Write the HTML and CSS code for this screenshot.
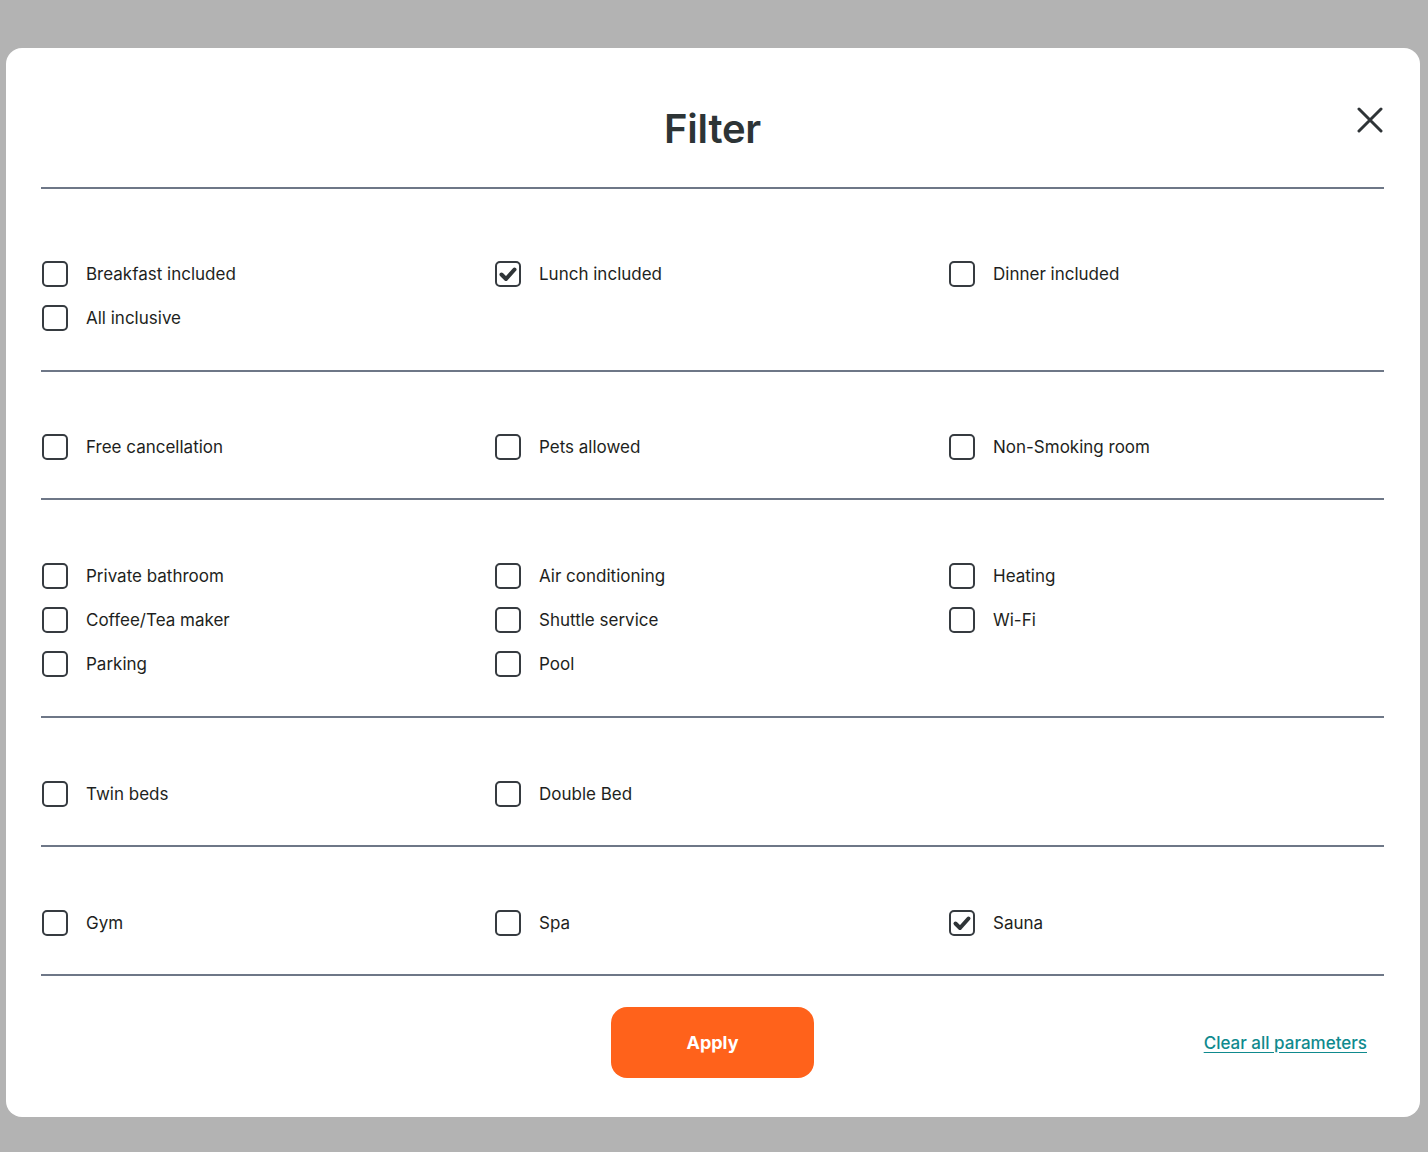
FILE: index.html
```html
<!DOCTYPE html>
<html lang="en">
<head>
<meta charset="utf-8">
<title>Filter</title>
<link rel="stylesheet" href="styles.css">
</head>
<body>
<div class="modal">
  <header class="modal-header">
    <h1 class="title">Filter</h1>
    <button class="close" aria-label="Close">
      <svg width="26" height="26" viewBox="0 0 26 26"><path d="M2 2 L24 24 M24 2 L2 24" stroke="#2f3437" stroke-width="3" stroke-linecap="round" fill="none"/></svg>
    </button>
  </header>

  <section class="group first">
    <label class="opt"><span class="box"></span><span>Breakfast included</span></label>
    <label class="opt"><span class="box checked"><svg viewBox="0 0 26 26" width="26" height="26"><path d="M6.5 13.5 L11 18 L19.5 8.5" stroke="#2f3437" stroke-width="4" fill="none" stroke-linecap="round" stroke-linejoin="round"/></svg></span><span>Lunch included</span></label>
    <label class="opt"><span class="box"></span><span>Dinner included</span></label>
    <label class="opt"><span class="box"></span><span>All inclusive</span></label>
  </section>

  <section class="group second">
    <label class="opt"><span class="box"></span><span>Free cancellation</span></label>
    <label class="opt"><span class="box"></span><span>Pets allowed</span></label>
    <label class="opt"><span class="box"></span><span>Non-Smoking room</span></label>
  </section>

  <section class="group three">
    <label class="opt"><span class="box"></span><span>Private bathroom</span></label>
    <label class="opt"><span class="box"></span><span>Air conditioning</span></label>
    <label class="opt"><span class="box"></span><span>Heating</span></label>
    <label class="opt"><span class="box"></span><span>Coffee/Tea maker</span></label>
    <label class="opt"><span class="box"></span><span>Shuttle service</span></label>
    <label class="opt"><span class="box"></span><span>Wi-Fi</span></label>
    <label class="opt"><span class="box"></span><span>Parking</span></label>
    <label class="opt"><span class="box"></span><span>Pool</span></label>
  </section>

  <section class="group">
    <label class="opt"><span class="box"></span><span>Twin beds</span></label>
    <label class="opt"><span class="box"></span><span>Double Bed</span></label>
  </section>

  <section class="group">
    <label class="opt"><span class="box"></span><span>Gym</span></label>
    <label class="opt"><span class="box"></span><span>Spa</span></label>
    <label class="opt"><span class="box checked"><svg viewBox="0 0 26 26" width="26" height="26"><path d="M6.5 13.5 L11 18 L19.5 8.5" stroke="#2f3437" stroke-width="4" fill="none" stroke-linecap="round" stroke-linejoin="round"/></svg></span><span>Sauna</span></label>
  </section>

  <footer class="modal-footer">
    <span></span>
    <button class="apply">Apply</button>
    <a class="clear" href="#">Clear all parameters</a>
  </footer>
</div>
</body>
</html>
```

FILE: styles.css
```css
* { box-sizing: border-box; }
html, body {
  margin: 0;
  padding: 0;
  background: #b3b3b3;
  font-family: Inter, "Noto Sans", sans-serif;
}
body {
  padding: 48px 8px 0 6px;
  height: 1152px;
  overflow: hidden;
}
.modal {
  width: 1414px;
  height: 1069px;
  background: #fff;
  border-radius: 16px;
  padding: 0 36px 0 35px;
}
.modal-header {
  position: relative;
  padding: 57px 0 34px;
  border-bottom: 2px solid #6e7787;
  text-align: center;
}
.title {
  margin: 0;
  font-size: 40px;
  line-height: 48px;
  font-weight: 600;
  color: #2d3436;
  letter-spacing: -0.2px;
}
.close {
  position: absolute;
  right: 1px;
  top: 59px;
  width: 26px;
  height: 26px;
  padding: 0;
  border: 0;
  background: none;
  cursor: pointer;
}
.close svg { display: block; }
.group {
  display: grid;
  grid-template-columns: 453px 454px 1fr;
  padding: 54px 0 29px;
  border-bottom: 2px solid #6e7787;
}
.group.first { padding: 63px 0 30px; }
.group.second { padding: 53px 0 29px; }
.group.three { padding: 54px 0 30px; }
.opt {
  display: flex;
  align-items: center;
  height: 44px;
  font-size: 17px;
  color: #1e1f21;
  cursor: pointer;
}
.box {
  flex: none;
  width: 26px;
  height: 26px;
  margin-left: 1px;
  margin-right: 18px;
  border: 2px solid #363b40;
  border-radius: 5px;
  position: relative;
}
.box svg {
  position: absolute;
  left: -2px;
  top: -2px;
}
.modal-footer {
  display: grid;
  grid-template-columns: 1fr auto 1fr;
  align-items: center;
  padding-top: 31px;
}
.apply {
  width: 203px;
  height: 71px;
  border: 0;
  border-radius: 16px;
  background: #ff621b;
  color: #fff;
  font-family: Inter, "Noto Sans", sans-serif;
  font-size: 18px;
  font-weight: 700;
  cursor: pointer;
}
.clear {
  justify-self: end;
  margin-right: 17px;
  color: #0f8a8e;
  font-size: 17px;
  font-weight: 500;
  text-decoration: underline;
  text-underline-offset: 3px;
}
```
